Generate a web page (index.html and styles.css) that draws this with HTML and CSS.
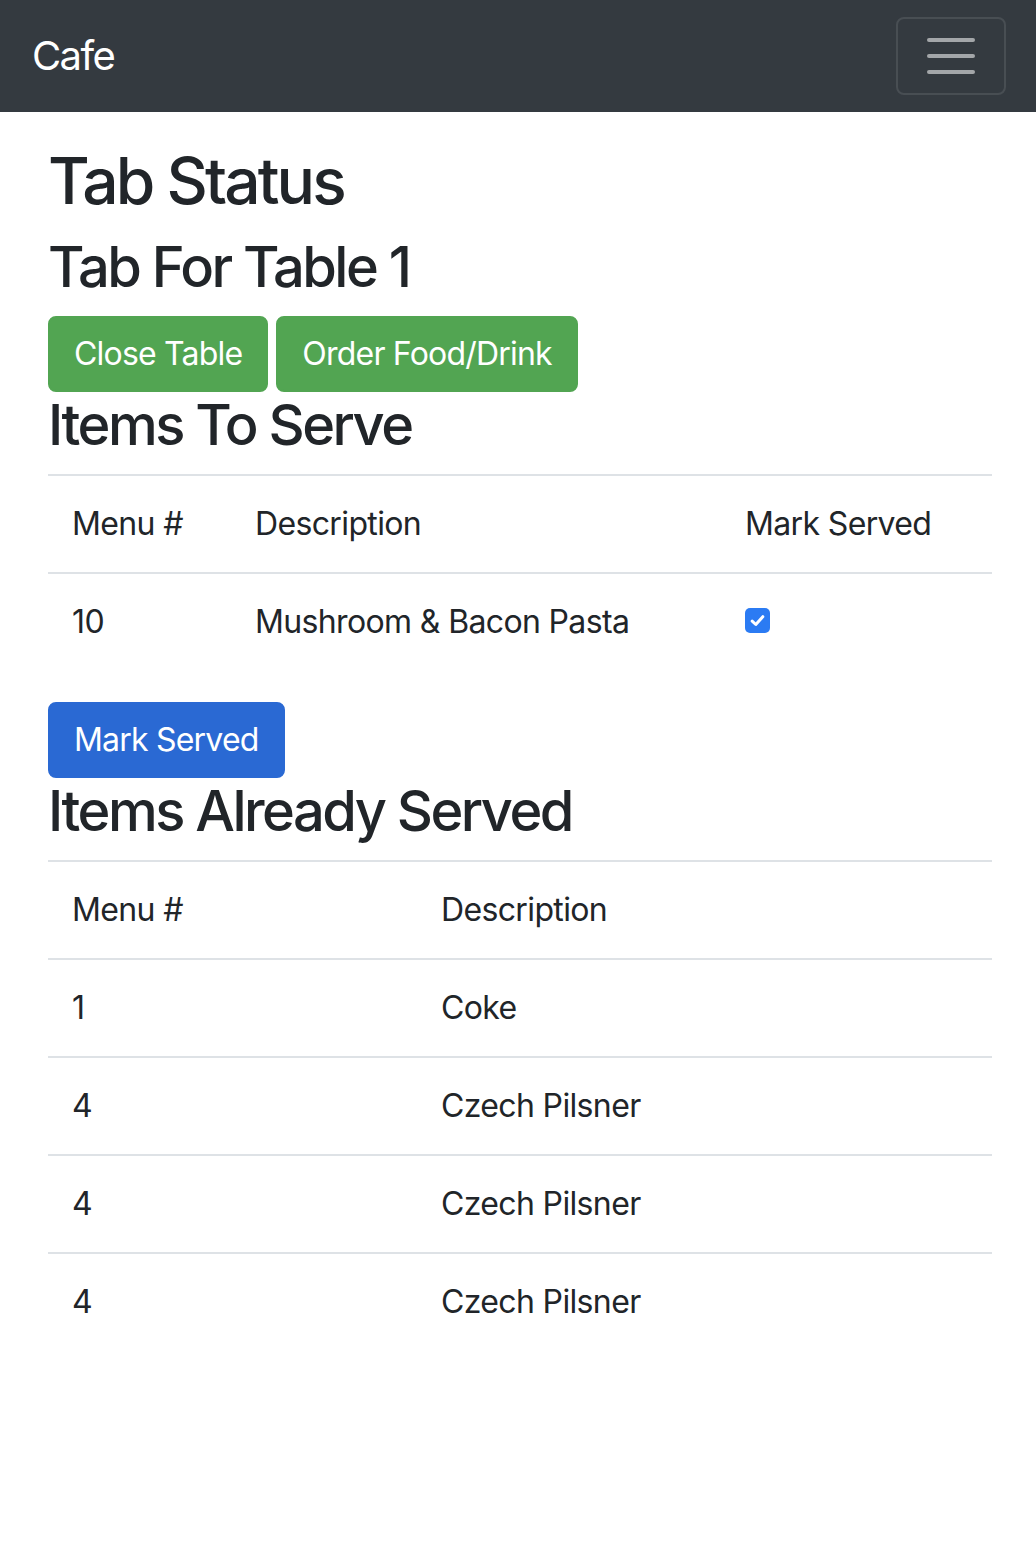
FILE: index.html
```html
<!DOCTYPE html>
<html>
<head>
<meta charset="utf-8">
<title>Cafe</title>
<link rel="stylesheet" href="styles.css">
</head>
<body>
<nav class="navbar">
  <a class="brand" href="#">Cafe</a>
  <button class="toggler" type="button" aria-label="Toggle navigation">
    <span class="bar"></span><span class="bar"></span><span class="bar"></span>
  </button>
</nav>
<main class="container">
  <h2 class="h2">Tab Status</h2>
  <h3 class="h3">Tab For Table 1</h3>
  <div class="btn-row">
    <button class="btn btn-green" type="button">Close Table</button>
    <button class="btn btn-green" type="button">Order Food/Drink</button>
  </div>
  <h3 class="h3">Items To Serve</h3>
  <table class="table t-serve">
    <thead>
      <tr><th class="c1">Menu #</th><th class="c2">Description</th><th class="c3">Mark Served</th></tr>
    </thead>
    <tbody>
      <tr><td>10</td><td>Mushroom &amp; Bacon Pasta</td><td><span class="check"><svg width="16" height="16" viewBox="0 0 16 16"><path d="M3 8.6 L6.4 11.8 L13 4.4" fill="none" stroke="#fff" stroke-width="2.8" stroke-linecap="round" stroke-linejoin="round"/></svg></span></td></tr>
    </tbody>
  </table>
  <button class="btn btn-blue" type="button">Mark Served</button>
  <h3 class="h3">Items Already Served</h3>
  <table class="table t-served">
    <thead>
      <tr><th class="d1">Menu #</th><th>Description</th></tr>
    </thead>
    <tbody>
      <tr><td>1</td><td>Coke</td></tr>
      <tr><td>4</td><td>Czech Pilsner</td></tr>
      <tr><td>4</td><td>Czech Pilsner</td></tr>
      <tr><td>4</td><td>Czech Pilsner</td></tr>
    </tbody>
  </table>
</main>
</body>
</html>
```
FILE: styles.css
```css
* { box-sizing: border-box; }
html, body { margin: 0; padding: 0; }
body {
  font-family: Inter, "Liberation Sans", Arial, sans-serif;
  font-size: 32px;
  line-height: 1.5;
  letter-spacing: -0.02em;
  color: #212529;
  background: #fff;
}
.navbar {
  height: 112px;
  background: #343a40;
  display: flex;
  align-items: center;
  justify-content: space-between;
  padding: 0 30px 0 32px;
}
.brand {
  color: #fff;
  text-decoration: none;
  font-size: 40px;
  line-height: 1.5;
  letter-spacing: -0.04em;
}
.toggler {
  width: 110px;
  height: 78px;
  border: 2px solid rgba(255,255,255,0.1);
  border-radius: 8px;
  background: transparent;
  display: flex;
  flex-direction: column;
  align-items: center;
  justify-content: center;
  gap: 12px;
  padding: 0;
}
.bar {
  display: block;
  width: 48px;
  height: 4px;
  border-radius: 2px;
  background: rgba(255,255,255,0.55);
}
.container {
  padding: 29px 44px 0 48px;
}
.h2, .h3 {
  margin: 0 0 16px;
  font-weight: 500;
  line-height: 1.2;
  letter-spacing: -0.045em;
}
.h2 { font-size: 64px; height: 77px; padding-top: 2px; }
.h3 { font-size: 56px; height: 66px; }
.btn-row {
  display: flex;
  gap: 8px;
}
.btn {
  font-family: inherit;
  font-size: 32px;
  line-height: 1.5;
  letter-spacing: -0.025em;
  padding: 12px 24px;
  border: 2px solid transparent;
  border-radius: 8px;
  color: #fff;
  cursor: pointer;
  display: block;
}
.btn-green { background: #52a552; border-color: #52a552; }
.btn-blue { background: #2a69d3; border-color: #2a69d3; }
.table {
  width: 100%;
  border-collapse: collapse;
  margin-bottom: 32px;
  table-layout: fixed;
}
.table th, .table td {
  text-align: left;
  font-weight: 400;
  padding: 24px;
  border-top: 2px solid #dee2e6;
  vertical-align: top;
}
.c1 { width: 183px; }
.c2 { width: 490px; }
.d1 { width: 369px; }
.check {
  display: inline-block;
  width: 25px;
  height: 25px;
  margin-top: 10px;
  background: #2b7bf3;
  border-radius: 5px;
  position: relative;
  vertical-align: top;
}
.check svg {
  position: absolute;
  left: 4px;
  top: 4px;
  width: 17px;
  height: 17px;
}
```
